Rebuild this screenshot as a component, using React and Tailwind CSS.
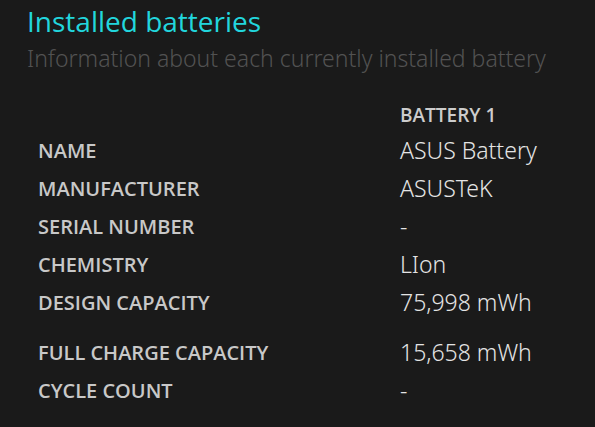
export default function App() {
  const rows = [
    ['NAME', 'ASUS Battery'],
    ['MANUFACTURER', 'ASUSTeK'],
    ['SERIAL NUMBER', '-'],
    ['CHEMISTRY', 'LIon'],
    ['DESIGN CAPACITY', '75,998 mWh'],
  ]
  const rows2 = [
    ['FULL CHARGE CAPACITY', '15,658 mWh'],
    ['CYCLE COUNT', '-'],
  ]

  const Row = ({ k, v }) => (
    <div className="grid h-[38px] grid-cols-[362px_1fr] items-center">
      <div className="text-[20px] font-semibold text-[#c8c8c8]">{k}</div>
      <div className="mb-[2px] font-['Noto_Sans',sans-serif] text-[23px] font-light text-[#e4e4e4]">{v}</div>
    </div>
  )

  return (
    <div className="h-[427px] w-[595px] overflow-hidden bg-[#1a1a1a] font-['Open_Sans',sans-serif]">
      <div className="px-[27px] pt-[3px]">
        <h1 className="text-[28px] leading-[36px] text-[#22d6dd]">Installed batteries</h1>
        <p className="mt-[4px] font-['Noto_Sans',sans-serif] text-[23px] font-light leading-[30px] text-[#525252]">
          Information about each currently installed battery
        </p>
      </div>

      <div className="mt-[27px] pl-[38px]">
        <div className="grid grid-cols-[362px_1fr] items-center">
          <div />
          <div className="h-[32px] text-[19px] font-semibold leading-[30px] text-[#cccccc]">BATTERY 1</div>
        </div>
        {rows.map(([k, v]) => (
          <Row key={k} k={k} v={v} />
        ))}
        <div className="h-[12px]" />
        {rows2.map(([k, v]) => (
          <Row key={k} k={k} v={v} />
        ))}
      </div>
    </div>
  )
}
